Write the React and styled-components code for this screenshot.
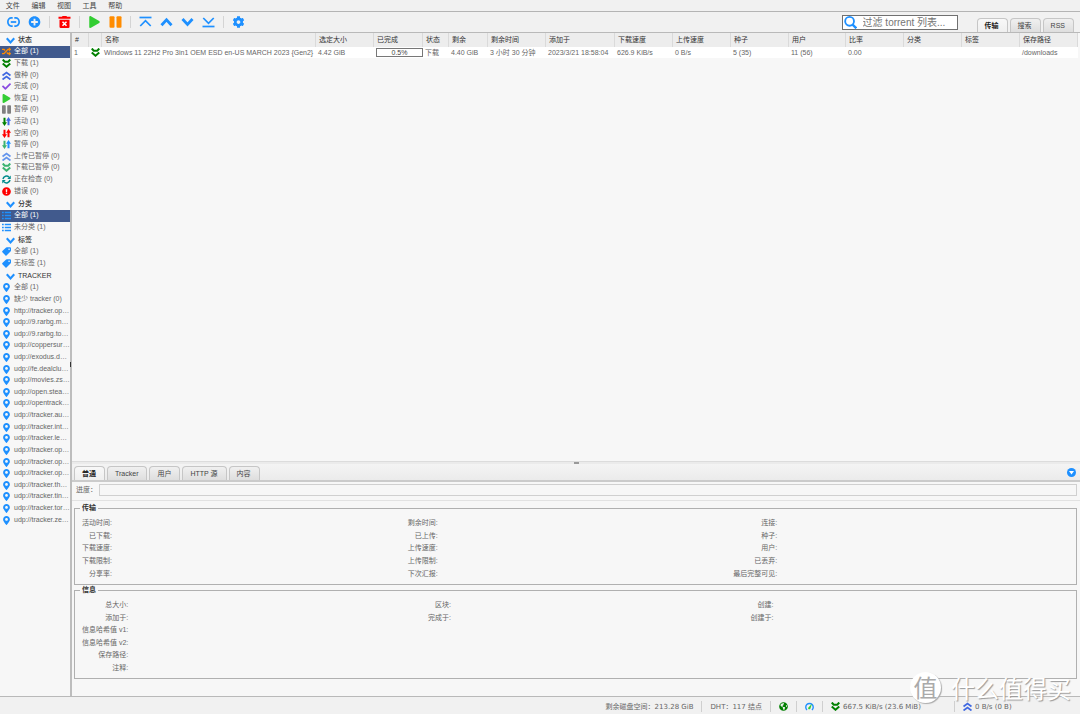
import React from 'react'
import styled, { createGlobalStyle } from 'styled-components'
import { FaPlusCircle, FaPlay, FaCog, FaRandom, FaCheck, FaExclamationCircle, FaMapMarkerAlt, FaGlobeAmericas } from 'react-icons/fa'

const blue = '#1e90ff'

const menus = ['文件', '编辑', '视图', '工具', '帮助']

const statusFilters = [
  { icon: <FaRandom color="#ff8c00" />, label: '全部 (1)', selected: true },
  { icon: <DoubleDown color="#008000" />, label: '下载 (1)' },
  { icon: <DoubleUp color="#4169e1" />, label: '做种 (0)' },
  { icon: <FaCheck color="#8a4be0" />, label: '完成 (0)' },
  { icon: <FaPlay color="#32cd32" />, label: '恢复 (1)' },
  { icon: <Pause color="#808080" />, label: '暂停 (0)' },
  { icon: <DownUp down="#008000" up="#4169e1" />, label: '活动 (1)' },
  { icon: <DownUp down="#ff0000" up="#ff0000" />, label: '空闲 (0)' },
  { icon: <DownUp down="#3cb371" up="#1e90ff" />, label: '暂停 (0)' },
  { icon: <DoubleUp color="#6495ed" />, label: '上传已暂停 (0)' },
  { icon: <DoubleDown color="#3cb371" />, label: '下载已暂停 (0)' },
  { icon: <Recheck />, label: '正在检查 (0)' },
  { icon: <FaExclamationCircle color="#ff0000" />, label: '错误 (0)' },
]

const categoryFilters = [
  { icon: <ListIcon />, label: '全部 (1)', selected: true },
  { icon: <ListIcon />, label: '未分类 (1)' },
]

const tagFilters = [
  { icon: <TagIcon />, label: '全部 (1)' },
  { icon: <TagIcon />, label: '无标签 (1)' },
]

const trackerFilters = [
  '全部 (1)', '缺少 tracker (0)', 'http://tracker.op…', 'udp://9.rarbg.m…', 'udp://9.rarbg.to…',
  'udp://coppersur…', 'udp://exodus.d…', 'udp://fe.dealclu…', 'udp://movies.zs…', 'udp://open.stea…',
  'udp://opentrack…', 'udp://tracker.au…', 'udp://tracker.int…', 'udp://tracker.le…', 'udp://tracker.op…',
  'udp://tracker.op…', 'udp://tracker.op…', 'udp://tracker.th…', 'udp://tracker.tin…', 'udp://tracker.tor…',
  'udp://tracker.ze…',
].map((label) => ({ icon: <FaMapMarkerAlt color={blue} />, label }))

const columns = [
  { title: '#', width: 17, value: '1' },
  { title: '', width: 13, value: <DoubleDown color="#008000" /> },
  { title: '名称', width: 214, value: 'Windows 11 22H2 Pro 3in1 OEM ESD en-US MARCH 2023 {Gen2}' },
  { title: '选定大小', width: 58, value: '4.42 GiB' },
  { title: '已完成', width: 49, progress: '0.5%' },
  { title: '状态', width: 26, value: '下载' },
  { title: '剩余', width: 39, value: '4.40 GiB' },
  { title: '剩余时间', width: 58, value: '3 小时 30 分钟' },
  { title: '添加于', width: 69, value: '2023/3/21 18:58:04' },
  { title: '下载速度', width: 58, value: '626.9 KiB/s' },
  { title: '上传速度', width: 58, value: '0 B/s' },
  { title: '种子', width: 58, value: '5 (35)' },
  { title: '用户', width: 57, value: '11 (56)' },
  { title: '比率', width: 58, value: '0.00' },
  { title: '分类', width: 58, value: '' },
  { title: '标签', width: 58, value: '' },
  { title: '保存路径', width: 58, value: '/downloads' },
]

const transferRows = [
  ['活动时间:', '剩余时间:', '连接:'],
  ['已下载:', '已上传:', '种子:'],
  ['下载速度:', '上传速度:', '用户:'],
  ['下载限制:', '上传限制:', '已丢弃:'],
  ['分享率:', '下次汇报:', '最后完整可见:'],
]

const infoRows = [
  ['总大小:', '区块:', '创建:'],
  ['添加于:', '完成于:', '创建于:'],
  ['信息哈希值 v1:', '', ''],
  ['信息哈希值 v2:', '', ''],
  ['保存路径:', '', ''],
  ['注释:', '', ''],
]

function DoubleDown({ color }) {
  return (
    <svg viewBox="0 0 18 18" fill="none" stroke={color} strokeWidth="4">
      <path d="M1.5 1 L5.5 5.5 H12.5 L16.5 1" />
      <path d="M1.5 9 L9 15.5 L16.5 9" />
    </svg>
  )
}

function DoubleUp({ color }) {
  return (
    <svg viewBox="0 0 18 18" fill="none" stroke={color} strokeWidth="3.6">
      <path d="M1 9 L9 3 L17 9" />
      <path d="M1 17 L9 11 L17 17" />
    </svg>
  )
}

function Pause({ color }) {
  return (
    <svg viewBox="0 0 18 18" fill={color}>
      <rect x="0" y="0.5" width="7.5" height="17" rx="1.5" />
      <rect x="10.5" y="0.5" width="7.5" height="17" rx="1.5" />
    </svg>
  )
}

function DownUp({ down, up }) {
  return (
    <svg viewBox="0 0 18 18">
      <path d="M3 1.5 H7 V10.5 H10 L5 18 L0 10.5 H3 Z" fill={down} />
      <path d="M11 16.5 H15 V7.5 H18 L13 0 L8 7.5 H11 Z" fill={up} />
    </svg>
  )
}

function Recheck() {
  return (
    <svg viewBox="0 0 18 18" fill="none" stroke="#008b8b" strokeWidth="3">
      <path d="M2 8 A7 7 0 0 1 14 4.5" />
      <path d="M16 10 A7 7 0 0 1 4 13.5" />
      <path d="M17.5 1 V8 H10.5 Z" fill="#008b8b" stroke="none" />
      <path d="M0.5 17 V10 H7.5 Z" fill="#008b8b" stroke="none" />
    </svg>
  )
}

function ListIcon() {
  return (
    <svg viewBox="0 0 18 18" stroke={blue} strokeWidth="2.6">
      <path d="M0 3 H3.5 M5.5 3 H18 M0 9 H3.5 M5.5 9 H18 M0 15 H3.5 M5.5 15 H18" />
    </svg>
  )
}

function TagIcon() {
  return (
    <svg viewBox="0 0 18 18">
      <path
        fill={blue}
        fillRule="evenodd"
        d="M16 0.5 H9.5 Q8.5 0.5 7.7 1.3 L0.8 8.2 Q-0.2 9.7 0.8 10.7 L7 17.2 Q8 18 9 17.2 L17 9 Q18 8 18 7 V3 Q18 0.5 16 0.5 Z M14.2 2.8 A1.4 1.4 0 1 1 14.1 2.8 Z"
      />
    </svg>
  )
}

function Chevron({ up, bar }) {
  return (
    <svg viewBox="0 0 24 24" fill="none" stroke={blue} strokeWidth={bar ? 3.4 : 5.6}>
      {bar && <path d={up ? 'M0 3 H24' : 'M0 21 H24'} />}
      {bar
        ? <path d={up ? 'M1.5 20 L12 9.5 L22.5 20' : 'M1.5 4 L12 14.5 L22.5 4'} />
        : <path d={up ? 'M2 18.5 L12 7.5 L22 18.5' : 'M2 6 L12 17 L22 6'} />}
    </svg>
  )
}

function LinkIcon() {
  return (
    <svg viewBox="1 2 24 20" fill="none" stroke={blue} strokeWidth="3.2">
      <path d="M11.5 4.5 H9 A6.4 7.5 0 0 0 9 19.5 H11.5" />
      <path d="M14.5 4.5 H17 A6.4 7.5 0 0 1 17 19.5 H14.5" />
      <path d="M8 12 H18" />
    </svg>
  )
}

function Bin() {
  return (
    <svg viewBox="0 0 24 24">
      <path d="M0 1.5 H7.5 V0 H16.5 V1.5 H24 V5.5 H0 Z" fill="#ff0000" />
      <path d="M2 7.5 H22 V21.5 Q22 24 19.5 24 H4.5 Q2 24 2 21.5 Z" fill="#ff0000" />
      <path d="M8 11.5 L16 19.5 M16 11.5 L8 19.5" stroke="#ffffff" strokeWidth="3" />
    </svg>
  )
}

function SearchIcon() {
  return (
    <svg viewBox="0 0 28 28" fill="none" stroke={blue}>
      <circle cx="12" cy="11.5" r="9.5" strokeWidth="4" />
      <path d="M18.5 18.5 L26.5 26.5" strokeWidth="5" />
    </svg>
  )
}

function Gauge() {
  return (
    <svg viewBox="0 0 18 18" fill="none">
      <path d="M4 16 A7.5 7.5 0 1 1 14 16" stroke={blue} strokeWidth="2.8" />
      <path d="M14 3.5 L11 12.5 A2.4 2.4 0 1 1 7.3 10.3 Z" fill="#32cd32" />
    </svg>
  )
}

function CollapseIcon() {
  return (
    <svg viewBox="0 0 18 18">
      <circle cx="9" cy="9" r="9" fill={blue} />
      <path d="M4 6 H14 L9 13 Z" fill="#ffffff" />
    </svg>
  )
}

const FilterGroup = ({ title, items }) => {
  const [open, setOpen] = React.useState(true)
  return (
    <section>
      <GroupTitle type="button" onClick={() => setOpen((prev) => !prev)}>
        <Chevron up={!open} />
        {title}
      </GroupTitle>
      {open && (
        <FilterList $count={items.length}>
          {items.map((item, i) => (
            <li key={i}>
              <FilterItem type="button" $selected={item.selected}>
                {item.icon}
                <span>{item.label}</span>
              </FilterItem>
            </li>
          ))}
        </FilterList>
      )}
    </section>
  )
}

const DetailBox = ({ title, rows }) => (
  <Fieldset>
    <legend>{title}</legend>
    <Details $rows={rows.length}>
      {rows.map((row) => row.map((label, i) => (
        <React.Fragment key={row[0] + i}>
          <dt>{label}</dt>
          <dd />
        </React.Fragment>
      )))}
    </Details>
  </Fieldset>
)

const App = () => {
  return (
    <>
      <GlobalStyle />
      <Page>
        <MenuBar>
          <MenuItems>
            {menus.map((name) => <button type="button" key={name}>{name}</button>)}
          </MenuItems>
        </MenuBar>
        <Toolbar>
          <Tool aria-label="添加链接"><LinkIcon /></Tool>
          <Tool aria-label="添加文件"><FaPlusCircle color={blue} /></Tool>
          <Divider />
          <Tool aria-label="删除"><Bin /></Tool>
          <Divider />
          <Tool aria-label="恢复"><FaPlay color="#32cd32" /></Tool>
          <Tool aria-label="暂停"><Pause color="#ff8c00" /></Tool>
          <Divider />
          <Tool aria-label="移到顶部"><Chevron up bar /></Tool>
          <Tool aria-label="上移"><Chevron up /></Tool>
          <Tool aria-label="下移"><Chevron /></Tool>
          <Tool aria-label="移到底部"><Chevron bar /></Tool>
          <Divider />
          <Tool aria-label="选项"><FaCog color={blue} /></Tool>
          <SearchBox>
            <SearchIcon />
            <input type="text" aria-label="过滤 torrent 列表" placeholder="过滤 torrent 列表..." />
          </SearchBox>
          <Tabs>
            <Tab $active>传输</Tab>
            <Tab>搜索</Tab>
            <Tab>RSS</Tab>
          </Tabs>
        </Toolbar>
        <Content>
          <Sidebar>
            <FilterGroup title="状态" items={statusFilters} />
            <FilterGroup title="分类" items={categoryFilters} />
            <FilterGroup title="标签" items={tagFilters} />
            <FilterGroup title="TRACKER" items={trackerFilters} />
          </Sidebar>
          <VerticalSplit><i /></VerticalSplit>
          <Main>
            <TableArea>
              <Torrents>
                <colgroup>
                  {columns.map((col, i) => <col key={i} style={{ width: col.width }} />)}
                </colgroup>
                <thead>
                  <tr>{columns.map((col, i) => <th key={i}>{col.title}</th>)}</tr>
                </thead>
                <tbody>
                  <tr>
                    {columns.map((col, i) => (
                      <td key={i}>{col.progress ? <CellProgress>{col.progress}</CellProgress> : col.value}</td>
                    ))}
                  </tr>
                </tbody>
              </Torrents>
            </TableArea>
            <HorizontalSplit><i /></HorizontalSplit>
            <PanelTabs>
              <Tabs>
                <Tab $active>普通</Tab>
                <Tab>Tracker</Tab>
                <Tab>用户</Tab>
                <Tab>HTTP 源</Tab>
                <Tab>内容</Tab>
              </Tabs>
              <Collapse aria-label="折叠"><CollapseIcon /></Collapse>
            </PanelTabs>
            <ProgressRow>
              <span>进度：</span>
              <div />
            </ProgressRow>
            <Panel>
              <DetailBox title="传输" rows={transferRows} />
              <DetailBox title="信息" rows={infoRows} />
            </Panel>
          </Main>
        </Content>
        <StatusBar>
          <Status>剩余磁盘空间：213.28 GiB</Status>
          <Status>DHT：117 结点</Status>
          <Status><FaGlobeAmericas color="#008000" /></Status>
          <Status><Gauge /></Status>
          <Status $width={132}><DoubleDown color="#008000" />667.5 KiB/s (23.6 MiB)</Status>
          <Status $width={126}><DoubleUp color="#4169e1" />0 B/s (0 B)</Status>
        </StatusBar>
        <Watermark>
          <b>值</b>
          <span>什么值得买</span>
        </Watermark>
      </Page>
    </>
  )
}

export default App

const GlobalStyle = createGlobalStyle`
  *{
    box-sizing:border-box;
  }
  body{
    margin:0;
    background:#f7f7f7;
    color:#666;
    font-family:"Liberation Sans","Noto Sans CJK SC",sans-serif;
    font-size:7px;
    line-height:10px;
  }
  button{
    border:none;
    background:none;
    margin:0;
    padding:0;
    color:inherit;
    font:inherit;
    cursor:pointer;
  }
  svg{
    display:block;
    flex:none;
  }
`

const Page = styled.div`
  position:relative;
  display:flex;
  flex-direction:column;
  min-height:100vh;
`

const MenuBar = styled.nav`
  background:#f1f1f1;
  border-bottom:1px solid #b4b4b4;
`

const MenuItems = styled.div`
  display:grid;
  grid-template-columns:repeat(5,1fr);
  width:128px;
  height:11px;
  color:#444;
  button{
    line-height:11px;
  }
`

const Toolbar = styled.div`
  display:flex;
  align-items:center;
  height:21px;
  padding:0 6px 0 3px;
  background:#f1f1f1;
  border-bottom:1px solid #b9b9b9;
`

const Tool = styled.button.attrs({ type: 'button' })`
  display:flex;
  align-items:center;
  justify-content:center;
  width:21px;
  height:20px;
  svg{
    width:13px;
    height:12px;
  }
`

const Divider = styled.span`
  width:1px;
  height:12px;
  margin:0 4px;
  background:#d4d4d4;
`

const SearchBox = styled.label`
  display:flex;
  align-items:center;
  gap:6px;
  width:116px;
  height:15px;
  margin:0 19px 0 auto;
  padding-left:1px;
  background:#fff;
  border:1px solid #707070;
  svg{
    width:13px;
    height:13px;
  }
  input{
    flex:1;
    min-width:0;
    height:13px;
    padding:0;
    border:none;
    outline:none;
    background:none;
    font-family:inherit;
    font-size:10px;
  }
  input::placeholder{
    color:#757575;
  }
`

const Tabs = styled.div`
  display:flex;
  align-self:flex-end;
  gap:2px;
`

const Tab = styled.button.attrs({ type: 'button' })`
  height:14px;
  min-width:31px;
  padding:0 8px 0 7px;
  border:1px solid #c6c6c6;
  border-bottom:none;
  border-radius:4px 4px 0 0;
  background:${(props) => props.$active ? 'linear-gradient(#f8f8f8,#efefef)' : 'linear-gradient(#f0f0f0,#dedede)'};
  color:${(props) => props.$active ? '#222' : '#444'};
  font-weight:${(props) => props.$active ? 'bold' : 'normal'};
`

const Content = styled.div`
  display:flex;
  flex:1;
`

const Sidebar = styled.aside`
  width:70px;
  flex:none;
  overflow:hidden;
`

const GroupTitle = styled.button`
  display:flex;
  align-items:center;
  gap:3px;
  width:100%;
  height:13px;
  padding:1px 0 0 6px;
  color:#333;
  font-weight:500;
  svg{
    width:9px;
    height:9px;
  }
`

/* 13 rows take 151px, the other lists follow the same rhythm */
const FilterList = styled.ul`
  display:grid;
  grid-auto-rows:1fr;
  height:${(props) => Math.round(props.$count * 151 / 13)}px;
  margin:0;
  padding:0;
  list-style:none;
`

const FilterItem = styled.button`
  display:flex;
  align-items:center;
  gap:3px;
  width:100%;
  height:100%;
  padding:0 0 0 2px;
  white-space:nowrap;
  background:${(props) => props.$selected ? '#415a8d' : 'none'};
  color:${(props) => props.$selected ? '#fff' : 'inherit'};
  svg{
    width:9px;
    height:9px;
  }
  span{
    padding-bottom:1px;
  }
`

const VerticalSplit = styled.div`
  display:flex;
  align-items:center;
  width:2px;
  flex:none;
  background:#bdbdbd;
  i{
    width:1px;
    height:5px;
    background:#333;
  }
`

const Main = styled.main`
  display:flex;
  flex:1;
  flex-direction:column;
  min-width:0;
`

const TableArea = styled.div`
  flex:1;
  overflow:hidden;
`

const Torrents = styled.table`
  width:1006px;
  table-layout:fixed;
  border-collapse:separate;
  border-spacing:0;
  th,td{
    overflow:hidden;
    white-space:nowrap;
    text-align:left;
  }
  th{
    height:14px;
    padding:0 0 0 3px;
    background:#ededed;
    border-right:1px solid #dadada;
    color:#333;
    font-weight:normal;
  }
  td{
    height:11px;
    padding:0 0 0 2px;
    background:#fff;
  }
  svg{
    width:9px;
    height:9px;
  }
`

const CellProgress = styled.div`
  height:9px;
  border:1px solid #777;
  line-height:7px;
  text-align:center;
  color:#444;
`

const HorizontalSplit = styled.div`
  display:flex;
  justify-content:center;
  height:3px;
  background:#ebebeb;
  border-top:1px solid #dcdcdc;
  i{
    width:5px;
    height:2px;
    background:#999;
  }
`

const PanelTabs = styled.div`
  display:flex;
  align-items:center;
  justify-content:space-between;
  height:18px;
  padding:0 4px 0 2px;
  background:linear-gradient(#f4f4f4,#ebebeb);
  border-bottom:2px solid #cbcbcb;
`

const Collapse = styled.button.attrs({ type: 'button' })`
  svg{
    width:9px;
    height:9px;
  }
`

const ProgressRow = styled.div`
  display:flex;
  align-items:center;
  gap:2px;
  height:19px;
  padding:0 3px 2px 4px;
  border-bottom:1px solid #e2e2e2;
  div{
    flex:1;
    height:12px;
    border:1px solid #d0d0d0;
  }
`

const Panel = styled.div`
  padding:2px 3px 17px 2px;
`

const Fieldset = styled.fieldset`
  min-width:0;
  margin:0;
  padding:4px 3px 4px 7px;
  border:1px solid #b0b0b0;
  legend{
    margin-left:-2px;
    padding:0 2px;
    color:#333;
    font-weight:bold;
  }
`

const Details = styled.dl`
  display:grid;
  grid-template-columns:repeat(3,auto 1fr);
  grid-auto-rows:1fr;
  align-items:center;
  height:${(props) => Math.round(props.$rows * 25 / 2)}px;
  margin:0;
  dt{
    text-align:right;
    white-space:nowrap;
  }
  dd{
    margin:0;
  }
`

const StatusBar = styled.footer`
  display:flex;
  align-items:flex-end;
  justify-content:flex-end;
  height:18px;
  padding-bottom:2px;
  background:#f1f1f1;
  border-top:1px solid #b9b9b9;
  font-family:"DejaVu Sans","Noto Sans CJK SC",sans-serif;
`

const Status = styled.span`
  display:flex;
  align-items:center;
  gap:3px;
  width:${(props) => props.$width ? props.$width + 'px' : 'auto'};
  height:11px;
  padding:0 8px;
  white-space:nowrap;
  & + &{
    border-left:1px solid #cfcfcf;
  }
  svg{
    width:9px;
    height:9px;
  }
`

const Watermark = styled.div`
  position:absolute;
  right:9px;
  bottom:11px;
  display:flex;
  align-items:center;
  gap:10px;
  pointer-events:none;
  color:#fff;
  font-family:"Noto Sans CJK SC",sans-serif;
  font-size:24px;
  line-height:24px;
  text-shadow:1px 1px 1px #999;
  b{
    width:31px;
    height:31px;
    border-radius:50%;
    background:#fff;
    box-shadow:1px 1px 1px #aaa;
    color:#aaa;
    line-height:29px;
    text-align:center;
    text-shadow:none;
    font-weight:normal;
  }
`
